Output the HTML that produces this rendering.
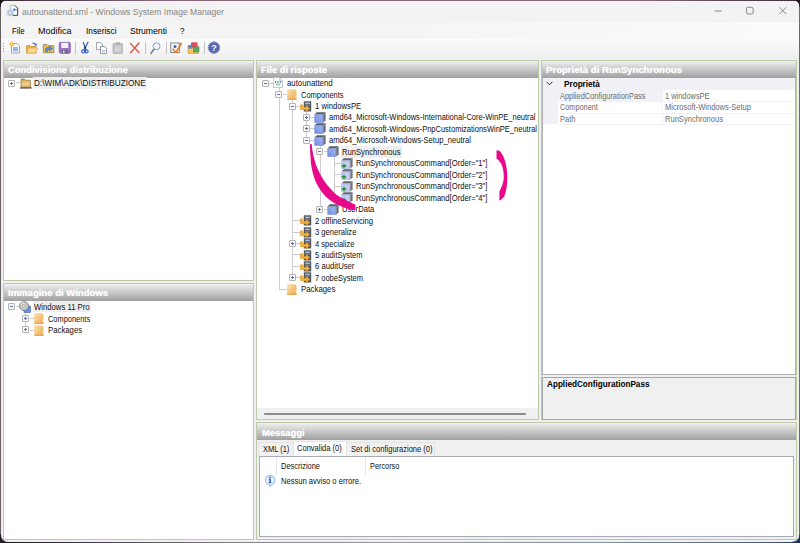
<!DOCTYPE html><html><head><meta charset="utf-8"><title>Windows System Image Manager</title><style>
*{box-sizing:border-box;margin:0;padding:0}
html,body{width:800px;height:543px;overflow:hidden;background:#f0f0f0;font-family:"Liberation Sans",sans-serif;}
body{position:relative}
.abs{position:absolute}
.t,.h{transform-origin:0 50%}
.t{position:absolute;white-space:nowrap;font-size:8.8px;line-height:12px;height:12px;color:#111}
.g{color:#6d6d6d}
.b{font-weight:bold;color:#000}
.m{font-size:9.6px;color:#000}
.ti{font-size:9.6px;color:#868686}
.panel{position:absolute;border:1px solid #bccaa9;background:#f0f0f0}
.hdr{position:absolute;left:0;right:0;top:1px;height:16px;background:linear-gradient(#ebebeb,#a0a0a0)}
.h{position:absolute;white-space:nowrap;font-size:9.9px;line-height:16px;height:16px;font-weight:bold;color:#fff;text-shadow:0 0 1px rgba(255,255,255,.8)}
.white{position:absolute;background:#fff}
.ex{position:absolute;width:7px;height:7px;border:1px solid #b2b2b2;background:#fafafa;border-radius:1px}
.ex i{position:absolute;left:1px;top:2px;width:3px;height:1px;background:#5f6eb0}
.ex b{position:absolute;left:2px;top:1px;width:1px;height:3px;background:#5f6eb0}
.ln{position:absolute;background:#cdcdcd}
svg{position:absolute;overflow:visible}
</style></head><body><div class="abs" style="left:0px;top:0px;width:800px;height:22px;background:#f3f3f3;"></div>
<div class="abs" style="left:0px;top:22px;width:800px;height:17px;background:linear-gradient(90deg,#f4f4f4 45%,#fbfbfb);"></div>
<div class="abs" style="left:0px;top:39px;width:800px;height:19px;background:linear-gradient(#fbfbfb,#f0f0f0);"></div>
<div class="t ti" style="left:22.00px;top:5.50px;transform:scaleX(0.8955);">autounattend.xml - Windows System Image Manager</div>
<svg style="left:6px;top:5px" width="13" height="12" viewBox="0 0 13 12"><path d="M4.400 .4h4.400l2.800 2.800v7.200h-7.200z" fill="#fff" stroke="#a9aeb6" stroke-width=".8"/><path d="M8.800 .4l2.800 2.800v7.200h-5" fill="none" stroke="#3c3c40" stroke-width=".9"/><circle cx="8.400" cy="4.700" r="1.100" fill="#2a55d0"/><circle cx="8" cy="4.300" r=".6" fill="#2f9a4a"/><rect x="9.300" y="4.200" width="1.600" height="1.200" fill="#a58fe0"/><circle cx="4.300" cy="7.800" r="3.300" fill="#b7c9e0" stroke="#c9d6e8" stroke-width=".7"/><circle cx="4.300" cy="7.800" r="1.100" fill="#e6edf6"/></svg>
<svg style="left:700px;top:0" width="100" height="22" viewBox="0 0 100 22"><g stroke="#7c7c7c" stroke-width=".9" fill="none"><path d="M14.500 11h7"/><rect x="46.500" y="7.300" width="6.600" height="6.600" rx="1.300"/><path d="M79.300 7.200l7 7m0-7l-7 7"/></g></svg>
<div class="t m" style="left:12.00px;top:24.50px;transform:scaleX(0.8081);">File</div>
<div class="t m" style="left:38.00px;top:24.50px;transform:scaleX(0.9375);">Modifica</div>
<div class="t m" style="left:85.50px;top:24.50px;transform:scaleX(0.8668);">Inserisci</div>
<div class="t m" style="left:129.50px;top:24.50px;transform:scaleX(0.9011);">Strumenti</div>
<div class="t m" style="left:180.00px;top:24.50px;transform:scaleX(0.8421);">?</div>
<svg style="left:0;top:40px" width="230" height="18" viewBox="0 40 230 18">
<g fill="#8a8a8a"><rect x="3" y="43" width="1" height="1"/><rect x="3" y="45.500" width="1" height="1"/><rect x="3" y="48" width="1" height="1"/><rect x="3" y="50.500" width="1" height="1"/></g>
<!-- new -->
<path d="M11.500 43.500h5.500l2.500 2.500v7h-8z" fill="#fff" stroke="#8e9bb0" stroke-width=".9"/><rect x="13" y="47" width="5" height="4.500" fill="#9db4e6"/><circle cx="11.800" cy="44.300" r="2.300" fill="#f5b942"/><circle cx="11.800" cy="44.300" r="1" fill="#fde9a8"/>
<!-- open -->
<path d="M26.500 45.500h3.500l1 1h5v6.500h-9.500z" fill="#f0b24a" stroke="#c98a2a" stroke-width=".7"/><path d="M28.500 48h9l-2 5h-9z" fill="#fbd890" stroke="#d79a3a" stroke-width=".6"/><path d="M31.500 43.500q2.500-2 4.500.5l.8-.8v2.600h-2.600l.9-.9q-1.400-1.500-3.600-1.400z" fill="#4a78c8"/>
<!-- folder arrow -->
<path d="M43.300 44.500h3.500l1 1.200h6v7h-10.500z" fill="#f3c04e" stroke="#8a7a5a" stroke-width=".8"/><path d="M45.500 51.500v-2.200q0-1.800 2-1.800h2v-1.700l3 2.700-3 2.700v-1.700h-2v2z" fill="#5b8fd8" stroke="#2f5fa8" stroke-width=".5"/>
<!-- save -->
<rect x="59.300" y="42.300" width="11" height="11" rx="1.200" fill="#9b6fc8" stroke="#7a4fae" stroke-width=".7"/><rect x="61.300" y="42.800" width="7" height="5.200" fill="#f4f0fa"/><rect x="62" y="50" width="6" height="3.300" fill="#6a6a78"/><rect x="63" y="50.600" width="1.500" height="2.300" fill="#ddd"/>
<rect x="75" y="42" width="1" height="12" fill="#c4c4c4"/>
<!-- cut -->
<g stroke="#2f58b8" stroke-width="1.200" fill="none" stroke-linecap="round"><path d="M83.300 42.500l2.600 7"/><path d="M88 42.300l-3.800 7.200"/></g><circle cx="83.200" cy="51.400" r="1.500" fill="none" stroke="#2f58b8" stroke-width="1.100"/><circle cx="86.600" cy="51.400" r="1.500" fill="none" stroke="#2f58b8" stroke-width="1.100"/><rect x="84.300" y="46.800" width="1.600" height="1.600" fill="#1a1a2a"/>
<!-- copy -->
<path d="M96.500 42.500h4l2 2v5h-6z" fill="#fff" stroke="#8a8f98" stroke-width=".8"/><path d="M100.500 46.500h4l2 2v5h-6z" fill="#fff" stroke="#7d8390" stroke-width=".8"/><rect x="102" y="50" width="3" height="2" fill="#b9c8e8"/>
<!-- paste -->
<rect x="113" y="43.500" width="9.500" height="10" rx=".8" fill="#c2c2c2" stroke="#a9a9a9" stroke-width=".7"/><rect x="115.500" y="42.300" width="4.500" height="2.200" fill="#b0b0b0"/><rect x="114.800" y="46" width="6" height="6.300" fill="#d3d3d3"/>
<!-- delete -->
<g stroke="#dc5a4e" stroke-width="1.400" stroke-linecap="round"><path d="M130.500 43.500l8.500 9"/><path d="M139 43l-8.500 9.800"/></g>
<rect x="145" y="42" width="1" height="12" fill="#c4c4c4"/>
<!-- find -->
<circle cx="156.500" cy="46.300" r="3.500" fill="#eef4fb" stroke="#8a9fbd" stroke-width="1"/><path d="M154 49.300l-3 4" stroke="#7a7f8a" stroke-width="1.600" stroke-linecap="round"/>
<rect x="166" y="42" width="1" height="12" fill="#c4c4c4"/>
<!-- validate -->
<rect x="170.800" y="43" width="8.500" height="9.500" fill="#fbfbfb" stroke="#70757f" stroke-width=".9"/><circle cx="175" cy="46.500" r="1.500" fill="#3b62b8"/><path d="M173.300 49.300l2.700 3.200 5.200-9" stroke="#e7862b" stroke-width="1.900" fill="none" stroke-linecap="round" stroke-linejoin="round"/>
<!-- config set -->
<rect x="188" y="46.500" width="10.500" height="6.800" fill="#f3c455" stroke="#c79a35" stroke-width=".6"/><rect x="191" y="42.300" width="6.500" height="5.500" rx="1" fill="#d9505c"/><rect x="193.500" y="47" width="5.500" height="5" fill="#5aa86a" stroke="#3f8a4f" stroke-width=".5"/><rect x="188.300" y="45" width="4" height="3.600" fill="#5b86d6"/>
<rect x="204" y="42" width="1" height="12" fill="#c4c4c4"/>
<!-- help -->
<circle cx="214" cy="47.600" r="5.800" fill="#5668b4" stroke="#8f99c9" stroke-width="1"/>
<text x="214" y="51" font-size="9" font-weight="bold" text-anchor="middle" fill="#fff" font-family="Liberation Sans, sans-serif">?</text>
</svg>
<div class="panel" style="left:3px;top:59.5px;width:251px;height:221.5px"><div class="hdr" style="top:1px;height:16.5px"></div><div class="white" style="left:0;right:0;top:17.5px;bottom:0"></div></div>
<div class="h" style="left:8.00px;top:62.45px;transform:scaleX(0.9510);">Condivisione distribuzione</div>
<div class="panel" style="left:3px;top:283px;width:251px;height:257px"><div class="hdr" style="top:0.5px;height:16.2px"></div><div class="white" style="left:0;right:0;top:16.7px;bottom:0"></div></div>
<div class="h" style="left:8.00px;top:285.30px;transform:scaleX(0.9652);">Immagine di Windows</div>
<div class="panel" style="left:256px;top:59.5px;width:283px;height:360.5px"><div class="hdr" style="top:1px;height:16.5px"></div><div class="white" style="left:0;right:0;top:17.5px;bottom:0"></div></div>
<div class="h" style="left:261.00px;top:62.45px;transform:scaleX(0.9469);">File di risposte</div>
<div class="panel" style="left:541px;top:59.5px;width:256px;height:360.5px"><div class="hdr" style="top:1px;height:16.5px"></div></div>
<div class="h" style="left:546.00px;top:62.45px;transform:scaleX(0.9720);">Propriet&agrave; di RunSynchronous</div>
<div class="panel" style="left:256px;top:422.2px;width:541px;height:117.8px"><div class="hdr" style="top:1.2px;height:16px"></div></div>
<div class="h" style="left:261.50px;top:425.10px;transform:scaleX(0.9441);">Messaggi</div>
<div class="ln" style="left:16.0px;top:82.0px;width:5.0px;height:1px"></div>
<div class="ex" style="left:8px;top:80px"><i></i><b></b></div>
<svg style="left:19.5px;top:77.5px" width="12" height="11" viewBox="0 0 12 11"><path d="M1 1h3.500l1 1.200h5v7h-9.500z" fill="#d8a655" stroke="#9a7a4a" stroke-width=".7"/><rect x="1.700" y="3.400" width="8.100" height="5" fill="#e9c77f"/><rect x=".2" y="9" width="11.400" height="1.700" fill="#6f6a72"/><rect x="1.800" y="9.500" width="2.500" height=".8" fill="#c9534a"/></svg>
<div class="abs" style="left:33.2px;top:77.3px;width:114.2px;height:11.4px;background:#eeeeee;"></div>
<div class="t" style="left:34.40px;top:77.00px;transform:scaleX(0.9282);">D:\WIM\ADK\DISTRIBUZIONE</div>
<div class="ln" style="left:25.0px;top:313.0px;width:1px;height:17.0px"></div>
<div class="ln" style="left:15.5px;top:306.0px;width:5.0px;height:1px"></div>
<div class="ex" style="left:8px;top:303px"><i></i></div>
<svg style="left:19.0px;top:300.7px" width="12" height="12" viewBox="0 0 12 12"><rect x="5" y="5" width="6.500" height="6.500" fill="#6f8fe6" stroke="#3f5fb8" stroke-width=".6"/><circle cx="5" cy="5" r="4.500" fill="#c9c9c9" stroke="#777" stroke-width=".8"/><circle cx="5" cy="5" r="1.400" fill="#f4f4f4" stroke="#888" stroke-width=".5"/><path d="M2 3.200a3.600 3.600 0 0 1 3-1.800" stroke="#fff" stroke-width=".9" fill="none"/></svg>
<div class="abs" style="left:32.7px;top:301.0px;width:58.2px;height:11.4px;background:#eeeeee;"></div>
<div class="t" style="left:33.90px;top:300.70px;transform:scaleX(0.8769);">Windows 11 Pro</div>
<div class="ln" style="left:29.5px;top:318.0px;width:5.0px;height:1px"></div>
<div class="ex" style="left:22px;top:315px"><i></i><b></b></div>
<svg style="left:34.2px;top:313.1px" width="10" height="11" viewBox="0 0 10 11"><defs><linearGradient id="fg13" x1="0" y1="0" x2="1" y2="1"><stop offset="0" stop-color="#fde2b0"/><stop offset="1" stop-color="#eda94a"/></linearGradient></defs><path d="M.2 .3h8.100l1.200 1.400v9h-9.300z" fill="url(#fg13)"/><path d="M8.700 5.500q1.200 1.200.7 3.600l-.9-.5z" fill="#fff6e6"/><rect x=".2" y="9.900" width="9.300" height=".8" fill="#e39a3e"/></svg>
<div class="t" style="left:47.90px;top:312.50px;transform:scaleX(0.8438);">Components</div>
<div class="ln" style="left:29.5px;top:330.0px;width:5.0px;height:1px"></div>
<div class="ex" style="left:22px;top:326px"><i></i><b></b></div>
<svg style="left:34.2px;top:324.6px" width="10" height="11" viewBox="0 0 10 11"><defs><linearGradient id="fg15" x1="0" y1="0" x2="1" y2="1"><stop offset="0" stop-color="#fde2b0"/><stop offset="1" stop-color="#eda94a"/></linearGradient></defs><path d="M.2 .3h8.100l1.200 1.400v9h-9.300z" fill="url(#fg15)"/><path d="M8.700 5.500q1.200 1.200.7 3.600l-.9-.5z" fill="#fff6e6"/><rect x=".2" y="9.900" width="9.300" height=".8" fill="#e39a3e"/></svg>
<div class="t" style="left:47.90px;top:324.00px;transform:scaleX(0.8825);">Packages</div>
<div class="ln" style="left:279.0px;top:88.1px;width:1px;height:201.3px"></div>
<div class="ln" style="left:292.0px;top:99.6px;width:1px;height:178.4px"></div>
<div class="ln" style="left:306.0px;top:111.0px;width:1px;height:29.4px"></div>
<div class="ln" style="left:320.0px;top:145.4px;width:1px;height:63.8px"></div>
<div class="ln" style="left:334.0px;top:156.9px;width:1px;height:40.8px"></div>
<div class="ln" style="left:269.0px;top:83.0px;width:5.0px;height:1px"></div>
<div class="ex" style="left:262px;top:80px"><i></i></div>
<svg style="left:272.5px;top:77.1px" width="10" height="11" viewBox="0 0 10 11"><path d="M.5 .5h6l3 3v7h-9z" fill="#fff" stroke="#b4b8c0" stroke-width=".8"/><path d="M6.500 .5v3h3" fill="none" stroke="#b4b8c0" stroke-width=".6"/><path d="M3.300 3.900l-1.200 1.200 1.200 1.200M6.700 3.900l1.200 1.200-1.200 1.200" stroke="#3a5fc8" stroke-width=".9" fill="none"/><circle cx="5" cy="5.100" r=".9" fill="#2f9a55"/><rect x="3" y="7.400" width="4" height=".8" fill="#3a9a8a"/></svg>
<div class="t" style="left:287.40px;top:77.10px;transform:scaleX(0.8876);">autounattend</div>
<div class="ln" style="left:282.7px;top:94.0px;width:5.0px;height:1px"></div>
<div class="ex" style="left:275px;top:91px"><i></i></div>
<svg style="left:287.4px;top:89.19999999999999px" width="10" height="11" viewBox="0 0 10 11"><defs><linearGradient id="fg18" x1="0" y1="0" x2="1" y2="1"><stop offset="0" stop-color="#fde2b0"/><stop offset="1" stop-color="#eda94a"/></linearGradient></defs><path d="M.2 .3h8.100l1.200 1.400v9h-9.300z" fill="url(#fg18)"/><path d="M8.700 5.500q1.200 1.200.7 3.600l-.9-.5z" fill="#fff6e6"/><rect x=".2" y="9.900" width="9.300" height=".8" fill="#e39a3e"/></svg>
<div class="t" style="left:301.10px;top:88.56px;transform:scaleX(0.8539);">Components</div>
<div class="ln" style="left:296.4px;top:106.0px;width:5.0px;height:1px"></div>
<div class="ex" style="left:289px;top:103px"><i></i></div>
<svg style="left:299.9px;top:100.5px" width="12" height="11" viewBox="0 0 12 11"><rect x="3.800" y=".3" width="7.400" height="10.200" fill="#55585e"/><rect x="5.200" y="1.600" width="4.600" height="1.600" fill="#9cc0f0"/><rect x="5.200" y="4" width="4.600" height="1" fill="#777b84"/><path d="M.3 3.800h2.600v2.400h3.300v-1.900l3.600 3.200-3.600 3.200v-1.900h-5.900z" fill="#f2b03c" stroke="#d18a1e" stroke-width=".4"/></svg>
<div class="t" style="left:314.80px;top:100.02px;transform:scaleX(0.8748);">1 windowsPE</div>
<div class="ln" style="left:310.1px;top:117.0px;width:5.0px;height:1px"></div>
<div class="ex" style="left:303px;top:114px"><i></i><b></b></div>
<svg style="left:313.6px;top:112.0px" width="12" height="11" viewBox="0 0 12 11"><defs><linearGradient id="cg21" x1="0" y1="1" x2="1" y2="0"><stop offset="0" stop-color="#6f8ee4"/><stop offset="1" stop-color="#a3b7f3"/></linearGradient></defs><path d="M.4 2.600l2.400-2.300h8.800l-2.400 2.300z" fill="#5a5e66"/><path d="M9.200 2.600l2.400-2.300v7.900l-2.400 2.500z" fill="#686c74"/><rect x=".4" y="2.600" width="8.800" height="8.100" fill="#6a86d8"/><rect x="1" y="3.200" width="7.600" height="6.900" fill="url(#cg21)"/></svg>
<div class="t" style="left:328.50px;top:111.48px;transform:scaleX(0.8567);">amd64_Microsoft-Windows-International-Core-WinPE_neutral</div>
<div class="ln" style="left:310.1px;top:128.0px;width:5.0px;height:1px"></div>
<div class="ex" style="left:303px;top:125px"><i></i><b></b></div>
<svg style="left:313.6px;top:123.4px" width="12" height="11" viewBox="0 0 12 11"><defs><linearGradient id="cg23" x1="0" y1="1" x2="1" y2="0"><stop offset="0" stop-color="#6f8ee4"/><stop offset="1" stop-color="#a3b7f3"/></linearGradient></defs><path d="M.4 2.600l2.400-2.300h8.800l-2.400 2.300z" fill="#5a5e66"/><path d="M9.200 2.600l2.400-2.300v7.900l-2.400 2.500z" fill="#686c74"/><rect x=".4" y="2.600" width="8.800" height="8.100" fill="#6a86d8"/><rect x="1" y="3.200" width="7.600" height="6.900" fill="url(#cg23)"/></svg>
<div class="t" style="left:328.50px;top:122.94px;transform:scaleX(0.8543);">amd64_Microsoft-Windows-PnpCustomizationsWinPE_neutral</div>
<div class="ln" style="left:310.1px;top:140.0px;width:5.0px;height:1px"></div>
<div class="ex" style="left:303px;top:137px"><i></i></div>
<svg style="left:313.6px;top:134.9px" width="12" height="11" viewBox="0 0 12 11"><defs><linearGradient id="cg25" x1="0" y1="1" x2="1" y2="0"><stop offset="0" stop-color="#6f8ee4"/><stop offset="1" stop-color="#a3b7f3"/></linearGradient></defs><path d="M.4 2.600l2.400-2.300h8.800l-2.400 2.300z" fill="#5a5e66"/><path d="M9.200 2.600l2.400-2.300v7.900l-2.400 2.500z" fill="#686c74"/><rect x=".4" y="2.600" width="8.800" height="8.100" fill="#6a86d8"/><rect x="1" y="3.200" width="7.600" height="6.900" fill="url(#cg25)"/></svg>
<div class="t" style="left:328.50px;top:134.40px;transform:scaleX(0.8669);">amd64_Microsoft-Windows-Setup_neutral</div>
<div class="ln" style="left:323.8px;top:151.0px;width:5.0px;height:1px"></div>
<div class="ex" style="left:316px;top:148px"><i></i></div>
<svg style="left:327.3px;top:146.4px" width="12" height="11" viewBox="0 0 12 11"><defs><linearGradient id="cg27" x1="0" y1="1" x2="1" y2="0"><stop offset="0" stop-color="#6f8ee4"/><stop offset="1" stop-color="#a3b7f3"/></linearGradient></defs><path d="M.4 2.600l2.400-2.300h8.800l-2.400 2.300z" fill="#5a5e66"/><path d="M9.200 2.600l2.400-2.300v7.900l-2.400 2.500z" fill="#686c74"/><rect x=".4" y="2.600" width="8.800" height="8.100" fill="#6a86d8"/><rect x="1" y="3.200" width="7.600" height="6.900" fill="url(#cg27)"/></svg>
<div class="abs" style="left:341.0px;top:146.2px;width:61.1px;height:11.4px;background:#eeeeee;"></div>
<div class="t" style="left:342.20px;top:145.86px;transform:scaleX(0.8669);">RunSynchronous</div>
<div class="ln" style="left:333.5px;top:163.0px;width:9.0px;height:1px"></div>
<svg style="left:341.0px;top:157.8px" width="12" height="11" viewBox="0 0 12 11"><path d="M.4 2.600l2.400-2.300h8.800l-2.400 2.300z" fill="#62666e"/><path d="M9.200 2.600l2.400-2.300v7.900l-2.400 2.500z" fill="#70747c"/><rect x=".4" y="2.600" width="8.800" height="8.100" fill="#9ea9e6"/><rect x="1.100" y="3.300" width="7.400" height="6.700" fill="#c6ccf4"/><path d="M.7 8h4.600M3 5.700v4.600" stroke="#1e8f2a" stroke-width="1.300"/></svg>
<div class="t" style="left:355.90px;top:157.32px;transform:scaleX(0.8661);">RunSynchronousCommand[Order=&quot;1&quot;]</div>
<div class="ln" style="left:333.5px;top:174.0px;width:9.0px;height:1px"></div>
<svg style="left:341.0px;top:169.3px" width="12" height="11" viewBox="0 0 12 11"><path d="M.4 2.600l2.400-2.300h8.800l-2.400 2.300z" fill="#62666e"/><path d="M9.200 2.600l2.400-2.300v7.900l-2.400 2.500z" fill="#70747c"/><rect x=".4" y="2.600" width="8.800" height="8.100" fill="#9ea9e6"/><rect x="1.100" y="3.300" width="7.400" height="6.700" fill="#c6ccf4"/><path d="M.7 8h4.600M3 5.700v4.600" stroke="#1e8f2a" stroke-width="1.300"/></svg>
<div class="t" style="left:355.90px;top:168.78px;transform:scaleX(0.8661);">RunSynchronousCommand[Order=&quot;2&quot;]</div>
<div class="ln" style="left:333.5px;top:186.0px;width:9.0px;height:1px"></div>
<svg style="left:341.0px;top:180.7px" width="12" height="11" viewBox="0 0 12 11"><path d="M.4 2.600l2.400-2.300h8.800l-2.400 2.300z" fill="#62666e"/><path d="M9.200 2.600l2.400-2.300v7.900l-2.400 2.500z" fill="#70747c"/><rect x=".4" y="2.600" width="8.800" height="8.100" fill="#9ea9e6"/><rect x="1.100" y="3.300" width="7.400" height="6.700" fill="#c6ccf4"/><path d="M.7 8h4.600M3 5.700v4.600" stroke="#1e8f2a" stroke-width="1.300"/></svg>
<div class="t" style="left:355.90px;top:180.24px;transform:scaleX(0.8661);">RunSynchronousCommand[Order=&quot;3&quot;]</div>
<div class="ln" style="left:333.5px;top:197.0px;width:9.0px;height:1px"></div>
<svg style="left:341.0px;top:192.2px" width="12" height="11" viewBox="0 0 12 11"><path d="M.4 2.600l2.400-2.300h8.800l-2.400 2.300z" fill="#62666e"/><path d="M9.200 2.600l2.400-2.300v7.900l-2.400 2.500z" fill="#70747c"/><rect x=".4" y="2.600" width="8.800" height="8.100" fill="#9ea9e6"/><rect x="1.100" y="3.300" width="7.400" height="6.700" fill="#c6ccf4"/><path d="M.7 8h4.600M3 5.700v4.600" stroke="#1e8f2a" stroke-width="1.300"/></svg>
<div class="t" style="left:355.90px;top:191.70px;transform:scaleX(0.8661);">RunSynchronousCommand[Order=&quot;4&quot;]</div>
<div class="ln" style="left:323.8px;top:209.0px;width:5.0px;height:1px"></div>
<div class="ex" style="left:316px;top:206px"><i></i><b></b></div>
<svg style="left:327.3px;top:203.7px" width="12" height="11" viewBox="0 0 12 11"><defs><linearGradient id="cg33" x1="0" y1="1" x2="1" y2="0"><stop offset="0" stop-color="#6f8ee4"/><stop offset="1" stop-color="#a3b7f3"/></linearGradient></defs><path d="M.4 2.600l2.400-2.300h8.800l-2.400 2.300z" fill="#5a5e66"/><path d="M9.200 2.600l2.400-2.300v7.900l-2.400 2.500z" fill="#686c74"/><rect x=".4" y="2.600" width="8.800" height="8.100" fill="#6a86d8"/><rect x="1" y="3.200" width="7.600" height="6.900" fill="url(#cg33)"/></svg>
<div class="t" style="left:342.20px;top:203.16px;transform:scaleX(0.8693);">UserData</div>
<div class="ln" style="left:292.4px;top:220.0px;width:9.0px;height:1px"></div>
<svg style="left:299.9px;top:215.1px" width="12" height="11" viewBox="0 0 12 11"><rect x="3.800" y=".3" width="7.400" height="10.200" fill="#55585e"/><rect x="5.200" y="1.600" width="4.600" height="1.600" fill="#9cc0f0"/><rect x="5.200" y="4" width="4.600" height="1" fill="#777b84"/><path d="M.3 3.800h2.600v2.400h3.300v-1.900l3.600 3.200-3.600 3.200v-1.900h-5.900z" fill="#f2b03c" stroke="#d18a1e" stroke-width=".4"/></svg>
<div class="t" style="left:314.80px;top:214.62px;transform:scaleX(0.8677);">2 offlineServicing</div>
<div class="ln" style="left:292.4px;top:232.0px;width:9.0px;height:1px"></div>
<svg style="left:299.9px;top:226.6px" width="12" height="11" viewBox="0 0 12 11"><rect x="3.800" y=".3" width="7.400" height="10.200" fill="#55585e"/><rect x="5.200" y="1.600" width="4.600" height="1.600" fill="#9cc0f0"/><rect x="5.200" y="4" width="4.600" height="1" fill="#777b84"/><path d="M.3 3.800h2.600v2.400h3.300v-1.900l3.600 3.200-3.600 3.200v-1.900h-5.900z" fill="#f2b03c" stroke="#d18a1e" stroke-width=".4"/></svg>
<div class="t" style="left:314.80px;top:226.08px;transform:scaleX(0.8636);">3 generalize</div>
<div class="ln" style="left:296.4px;top:243.0px;width:5.0px;height:1px"></div>
<div class="ex" style="left:289px;top:240px"><i></i><b></b></div>
<svg style="left:299.9px;top:238.0px" width="12" height="11" viewBox="0 0 12 11"><rect x="3.800" y=".3" width="7.400" height="10.200" fill="#55585e"/><rect x="5.200" y="1.600" width="4.600" height="1.600" fill="#9cc0f0"/><rect x="5.200" y="4" width="4.600" height="1" fill="#777b84"/><path d="M.3 3.800h2.600v2.400h3.300v-1.900l3.600 3.200-3.600 3.200v-1.900h-5.900z" fill="#f2b03c" stroke="#d18a1e" stroke-width=".4"/></svg>
<div class="t" style="left:314.80px;top:237.54px;transform:scaleX(0.8571);">4 specialize</div>
<div class="ln" style="left:292.4px;top:254.0px;width:9.0px;height:1px"></div>
<svg style="left:299.9px;top:249.5px" width="12" height="11" viewBox="0 0 12 11"><rect x="3.800" y=".3" width="7.400" height="10.200" fill="#55585e"/><rect x="5.200" y="1.600" width="4.600" height="1.600" fill="#9cc0f0"/><rect x="5.200" y="4" width="4.600" height="1" fill="#777b84"/><path d="M.3 3.800h2.600v2.400h3.300v-1.900l3.600 3.200-3.600 3.200v-1.900h-5.900z" fill="#f2b03c" stroke="#d18a1e" stroke-width=".4"/></svg>
<div class="t" style="left:314.80px;top:249.00px;transform:scaleX(0.8520);">5 auditSystem</div>
<div class="ln" style="left:292.4px;top:266.0px;width:9.0px;height:1px"></div>
<svg style="left:299.9px;top:261.0px" width="12" height="11" viewBox="0 0 12 11"><rect x="3.800" y=".3" width="7.400" height="10.200" fill="#55585e"/><rect x="5.200" y="1.600" width="4.600" height="1.600" fill="#9cc0f0"/><rect x="5.200" y="4" width="4.600" height="1" fill="#777b84"/><path d="M.3 3.800h2.600v2.400h3.300v-1.900l3.600 3.200-3.600 3.200v-1.900h-5.900z" fill="#f2b03c" stroke="#d18a1e" stroke-width=".4"/></svg>
<div class="t" style="left:314.80px;top:260.46px;transform:scaleX(0.8756);">6 auditUser</div>
<div class="ln" style="left:296.4px;top:277.0px;width:5.0px;height:1px"></div>
<div class="ex" style="left:289px;top:274px"><i></i><b></b></div>
<svg style="left:299.9px;top:272.4px" width="12" height="11" viewBox="0 0 12 11"><rect x="3.800" y=".3" width="7.400" height="10.200" fill="#55585e"/><rect x="5.200" y="1.600" width="4.600" height="1.600" fill="#9cc0f0"/><rect x="5.200" y="4" width="4.600" height="1" fill="#777b84"/><path d="M.3 3.800h2.600v2.400h3.300v-1.900l3.600 3.200-3.600 3.200v-1.900h-5.900z" fill="#f2b03c" stroke="#d18a1e" stroke-width=".4"/></svg>
<div class="t" style="left:314.80px;top:271.92px;transform:scaleX(0.8516);">7 oobeSystem</div>
<div class="ln" style="left:278.7px;top:289.0px;width:9.0px;height:1px"></div>
<svg style="left:287.4px;top:284.0px" width="10" height="11" viewBox="0 0 10 11"><defs><linearGradient id="fg41" x1="0" y1="0" x2="1" y2="1"><stop offset="0" stop-color="#fde2b0"/><stop offset="1" stop-color="#eda94a"/></linearGradient></defs><path d="M.2 .3h8.100l1.200 1.400v9h-9.300z" fill="url(#fg41)"/><path d="M8.700 5.500q1.200 1.200.7 3.600l-.9-.5z" fill="#fff6e6"/><rect x=".2" y="9.900" width="9.300" height=".8" fill="#e39a3e"/></svg>
<div class="t" style="left:301.10px;top:283.38px;transform:scaleX(0.8903);">Packages</div>
<div class="abs" style="left:257px;top:408px;width:281px;height:11px;background:#f0f0f0;"></div>
<div class="abs" style="left:264px;top:413px;width:262px;height:1.6px;background:#8c8c8c;border-radius:1px"></div>
<svg style="left:0;top:0" width="800" height="543" viewBox="0 0 800 543"><path d="M311.7 144.0C311.9 145.7 312.2 150.0 313.1 154.0C314.0 158.0 315.3 163.3 317.3 168.0C319.3 172.7 322.1 177.8 325.0 182.0C327.9 186.2 331.8 190.4 334.8 193.2C337.8 196.0 340.4 197.2 343.2 198.8C346.0 200.4 349.6 202.0 351.6 203.0C353.7 204.0 354.9 204.4 355.5 204.7L355.1 210.7C354.8 210.6 355.0 210.6 353.0 210.0C351.0 209.4 346.7 208.6 343.2 207.2C339.7 205.8 335.4 203.9 332.0 201.6C328.6 199.3 325.6 196.5 322.9 193.2C320.2 189.9 317.8 186.2 315.9 182.0C314.0 177.8 312.6 172.7 311.7 168.0C310.8 163.3 310.6 158.0 310.3 154.0C310.0 150.0 310.0 145.8 309.9 144.2Z" fill="#e8088c"/><path d="M496.500 150.300L499.500 150.800C504 155 507.400 166 507.400 177.400C507.400 185 506 192 504.200 196.800L500.300 200.600L499.400 200L499.400 191.600C502 186 503.800 182 503.800 177.400C503.800 172 503 168 501.600 164.500C500.500 162 498.500 160 496.500 158.700Z" fill="#e8088c"/></svg>
<div class="abs" style="left:542px;top:78px;width:254px;height:297px;background:#fff;border:1px solid #b4b4b4;border-top:0"></div>
<div class="abs" style="left:543px;top:78px;width:252px;height:46px;background:#f0f0f6;"></div>
<div class="abs" style="left:558px;top:90px;width:104px;height:11.5px;background:#f1f1f7;"></div>
<div class="abs" style="left:662px;top:90px;width:133px;height:11.5px;background:#fff;"></div>
<div class="abs" style="left:558px;top:101.5px;width:237px;height:11.5px;background:#fff;"></div>
<div class="abs" style="left:558px;top:113px;width:237px;height:11px;background:#fff;"></div>
<div class="abs" style="left:558px;top:101px;width:237px;height:1px;background:#f1f1f6;"></div>
<div class="abs" style="left:558px;top:112.5px;width:237px;height:1px;background:#f1f1f6;"></div>
<div class="abs" style="left:558px;top:124px;width:237px;height:1px;background:#f1f1f6;"></div>
<div class="abs" style="left:662px;top:90px;width:1px;height:34px;background:#f1f1f6;"></div>
<svg style="left:546px;top:81px" width="7" height="5" viewBox="0 0 7 5"><path d="M.6 .8l2.900 3 2.900-3" stroke="#333" stroke-width="1" fill="none"/></svg>
<div class="t b" style="left:563.60px;top:78.00px;transform:scaleX(0.9294);">Propriet&agrave;</div>
<div class="t g" style="left:560.20px;top:89.70px;transform:scaleX(0.8446);">AppliedConfigurationPass</div>
<div class="t g" style="left:560.20px;top:101.30px;transform:scaleX(0.8311);">Component</div>
<div class="t g" style="left:560.20px;top:112.70px;transform:scaleX(0.8614);">Path</div>
<div class="t g" style="left:664.50px;top:89.70px;transform:scaleX(0.8426);">1 windowsPE</div>
<div class="t g" style="left:664.50px;top:101.30px;transform:scaleX(0.8581);">Microsoft-Windows-Setup</div>
<div class="t g" style="left:664.50px;top:112.70px;transform:scaleX(0.8595);">RunSynchronous</div>
<div class="abs" style="left:542px;top:377px;width:254px;height:42.5px;background:#f0f0f0;border:1px solid #a6a6a6"></div>
<div class="t b" style="left:546.50px;top:378.00px;transform:scaleX(0.9279);">AppliedConfigurationPass</div>
<div class="abs" style="left:258px;top:442px;width:36px;height:14px;background:#f1f1f1;border:1px solid #e4e4e4;border-bottom:0"></div>
<div class="abs" style="left:346px;top:442px;width:89px;height:14px;background:#f1f1f1;border:1px solid #e4e4e4;border-bottom:0"></div>
<div class="abs" style="left:293px;top:441px;width:54px;height:16px;background:#fff;border:1px solid #e4e4e4;border-bottom:0"></div>
<div class="abs" style="left:259px;top:456px;width:535px;height:81px;background:#fff;border:1px solid #a5acb5"></div>
<div class="t" style="left:262.70px;top:442.70px;transform:scaleX(0.8492);">XML (1)</div>
<div class="t" style="left:297.20px;top:441.80px;transform:scaleX(0.8561);">Convalida (0)</div>
<div class="t" style="left:351.00px;top:442.70px;transform:scaleX(0.8547);">Set di configurazione (0)</div>
<div class="abs" style="left:276px;top:457px;width:1px;height:18px;background:#e8e8e8;"></div>
<div class="abs" style="left:365px;top:457px;width:1px;height:18px;background:#e8e8e8;"></div>
<div class="t" style="left:281.00px;top:459.50px;transform:scaleX(0.8484);">Descrizione</div>
<div class="t" style="left:370.20px;top:459.50px;transform:scaleX(0.8323);">Percorso</div>
<svg style="left:264px;top:474.8px" width="12" height="12" viewBox="0 0 12 12"><path d="M6 .6a4.900 4.600 0 0 1 2.600 8.500l-2.600 2.400-.6-1.800a4.900 4.600 0 0 1 .6-9.100z" fill="#eaf2fc" stroke="#9cc0ee" stroke-width="1.100"/><rect x="5.300" y="4.200" width="1.500" height="3.600" fill="#2a52b8"/><rect x="4.700" y="4.200" width="1.400" height=".8" fill="#2a52b8"/><rect x="4.600" y="7.300" width="2.900" height=".8" fill="#2a52b8"/><circle cx="6" cy="2.700" r=".9" fill="#2a52b8"/></svg>
<div class="t" style="left:281.00px;top:475.30px;transform:scaleX(0.8611);">Nessun avviso o errore.</div>
<div class="abs" style="left:0px;top:0px;width:800px;height:1px;background:linear-gradient(90deg,#3a2c38,#86687a 20%,#86687a 80%,#3a2c38);"></div>
<div class="abs" style="left:0px;top:0px;width:1px;height:543px;background:#676166;"></div>
<div class="abs" style="left:799px;top:0px;width:1px;height:543px;background:#71666b;"></div>
<div class="abs" style="left:0px;top:541.7px;width:800px;height:1.3px;background:linear-gradient(90deg,#1e1420,#4a3a50 12%,#8a8088 30%,#9a9aa8 50%,#7f8fa8 75%,#4a6088 95%,#1a3a6a);"></div>
<svg style="left:0;top:0;pointer-events:none" width="800" height="543" viewBox="0 0 800 543"><path d="M0 0h7a6.500 6.500 0 0 0-6.500 6.500v.5h-.5z" fill="#1d161c"/><path d="M800 0h-7a6.500 6.500 0 0 1 6.500 6.500v.5h.5z" fill="#24181f"/><path d="M0 543h8v-1a7 7 0 0 1-7-7v-1h-1z" fill="#2a1c2a"/><path d="M800 543h-8v-1.300a6.500 6.500 0 0 0 7.200-6.700h.8z" fill="#1b3464"/></svg></body></html>
